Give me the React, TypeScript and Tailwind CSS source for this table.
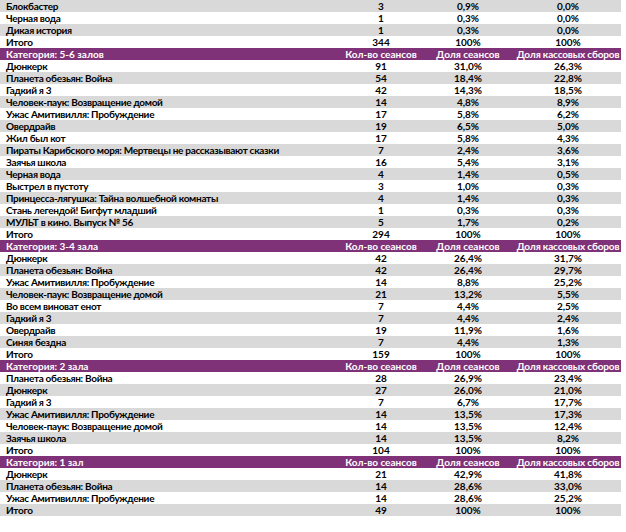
import React from "react";

type Row = [string, string, string, string];

const sections: { title?: string; rows: Row[]; total: Row; startGrey?: boolean }[] = [
  {
    startGrey: true,
    rows: [
      ["Блокбастер", "3", "0,9%", "0,0%"],
      ["Черная вода", "1", "0,3%", "0,0%"],
      ["Дикая история", "1", "0,3%", "0,0%"],
    ],
    total: ["Итого", "344", "100%", "100%"],
  },
  {
    title: "Категория: 5-6 залов",
    rows: [
      ["Дюнкерк", "91", "31,0%", "26,3%"],
      ["Планета обезьян: Война", "54", "18,4%", "22,8%"],
      ["Гадкий я 3", "42", "14,3%", "18,5%"],
      ["Человек-паук: Возвращение домой", "14", "4,8%", "8,9%"],
      ["Ужас Амитивилля: Пробуждение", "17", "5,8%", "6,2%"],
      ["Овердрайв", "19", "6,5%", "5,0%"],
      ["Жил был кот", "17", "5,8%", "4,3%"],
      ["Пираты Карибского моря: Мертвецы не рассказывают сказки", "7", "2,4%", "3,6%"],
      ["Заячья школа", "16", "5,4%", "3,1%"],
      ["Черная вода", "4", "1,4%", "0,5%"],
      ["Выстрел в пустоту", "3", "1,0%", "0,3%"],
      ["Принцесса-лягушка: Тайна волшебной комнаты", "4", "1,4%", "0,3%"],
      ["Стань легендой! Бигфут младший", "1", "0,3%", "0,3%"],
      ["МУЛЬТ в кино. Выпуск № 56", "5", "1,7%", "0,2%"],
    ],
    total: ["Итого", "294", "100%", "100%"],
  },
  {
    title: "Категория: 3-4 зала",
    rows: [
      ["Дюнкерк", "42", "26,4%", "31,7%"],
      ["Планета обезьян: Война", "42", "26,4%", "29,7%"],
      ["Ужас Амитивилля: Пробуждение", "14", "8,8%", "25,2%"],
      ["Человек-паук: Возвращение домой", "21", "13,2%", "5,5%"],
      ["Во всем виноват енот", "7", "4,4%", "2,5%"],
      ["Гадкий я 3", "7", "4,4%", "2,4%"],
      ["Овердрайв", "19", "11,9%", "1,6%"],
      ["Синяя бездна", "7", "4,4%", "1,3%"],
    ],
    total: ["Итого", "159", "100%", "100%"],
  },
  {
    title: "Категория: 2 зала",
    rows: [
      ["Планета обезьян: Война", "28", "26,9%", "23,4%"],
      ["Дюнкерк", "27", "26,0%", "21,0%"],
      ["Гадкий я 3", "7", "6,7%", "17,7%"],
      ["Ужас Амитивилля: Пробуждение", "14", "13,5%", "17,3%"],
      ["Человек-паук: Возвращение домой", "14", "13,5%", "12,4%"],
      ["Заячья школа", "14", "13,5%", "8,2%"],
    ],
    total: ["Итого", "104", "100%", "100%"],
  },
  {
    title: "Категория: 1 зал",
    rows: [
      ["Дюнкерк", "21", "42,9%", "41,8%"],
      ["Планета обезьян: Война", "14", "28,6%", "33,0%"],
      ["Ужас Амитивилля: Пробуждение", "14", "28,6%", "25,2%"],
    ],
    total: ["Итого", "49", "100%", "100%"],
  },
];

function DataRow({ r, grey }: { r: Row; grey: boolean }) {
  return (
    <div
      className={
        "grid grid-cols-[341px_80px_94px_106px] h-[12px] leading-[12px] text-black " +
        (grey ? "bg-[#d9d9d9]" : "bg-white")
      }
    >
      <div className="pl-[6px] whitespace-nowrap overflow-hidden tracking-[-0.3px]">{r[0]}</div>
      <div className="text-center">{r[1]}</div>
      <div className="text-center">{r[2]}</div>
      <div className="text-center">{r[3]}</div>
    </div>
  );
}

function Header({ title }: { title: string }) {
  return (
    <div className="grid grid-cols-[341px_80px_94px_106px] h-[12px] leading-[12px] text-white bg-[#7f3278]">
      <div className="pl-[6px] whitespace-nowrap">{title}</div>
      <div className="text-center whitespace-nowrap">Кол-во сеансов</div>
      <div className="text-center whitespace-nowrap">Доля сеансов</div>
      <div className="text-center whitespace-nowrap tracking-[-0.15px]">Доля кассовых сборов</div>
    </div>
  );
}

export default function App() {
  return (
    <div
      className="w-[626px] h-[532px] overflow-hidden bg-white font-bold text-[10px]"
      style={{ fontFamily: "Lato, 'Open Sans', sans-serif" }}
    >
      <div className="w-[621px]">
        {sections.map((s, si) => {
          const start = s.startGrey ? 1 : 0;
          return (
            <div key={si} className="flex flex-col">
              {s.title && <Header title={s.title} />}
              {s.rows.map((r, i) => (
                <DataRow key={i} r={r} grey={(i + start) % 2 === 1} />
              ))}
              <DataRow r={s.total} grey={(s.rows.length + start) % 2 === 1} />
            </div>
          );
        })}
      </div>
    </div>
  );
}
